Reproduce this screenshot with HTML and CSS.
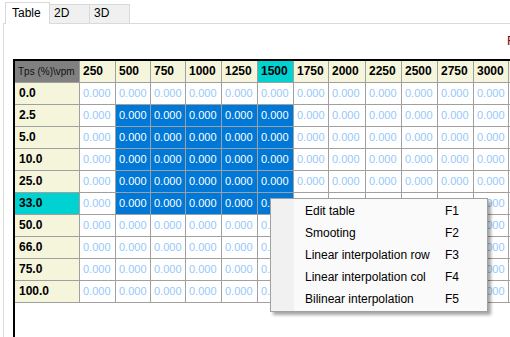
FILE: index.html
```html
<!DOCTYPE html>
<html lang="en">
<head>
  <meta charset="UTF-8">
  <meta name="viewport" content="width=device-width, initial-scale=1.0">
  <title>Map editor</title>
  <link rel="stylesheet" href="styles.css">
</head>
<body>
  <div class="tabs">
    <div class="tab active">Table</div>
    <div class="tab">2D</div>
    <div class="tab">3D</div>
  </div>

  <div class="panel">
    <div class="toolbar"><span class="axis-label">RPM</span></div>
    <div class="grid-box">
      <div class="grid" id="grid"></div>
    </div>
  </div>

  <div class="menu">
    <div class="menu-item"><span class="menu-text">Edit table</span><span>F1</span></div>
    <div class="menu-item"><span class="menu-text">Smooting</span><span>F2</span></div>
    <div class="menu-item"><span class="menu-text">Linear interpolation row</span><span>F3</span></div>
    <div class="menu-item"><span class="menu-text">Linear interpolation col</span><span>F4</span></div>
    <div class="menu-item"><span class="menu-text">Bilinear interpolation</span><span>F5</span></div>
  </div>

  <script>
    const grid = document.getElementById('grid');
    const cols = [250, 500, 750, 1000, 1250, 1500, 1750, 2000, 2250, 2500, 2750, 3000];
    const rows = ['0.0', '2.5', '5.0', '10.0', '25.0', '33.0', '50.0', '66.0', '75.0', '100.0'];
    const hotCol = 5;
    const hotRow = 5;

    function addCell(text, cls) {
      const cell = document.createElement('div');
      cell.className = 'cell ' + cls;
      cell.textContent = text;
      grid.appendChild(cell);
    }

    // Header row (last column only peeks in at the edge)
    addCell('Tps (%)\\vpm', 'corner');
    cols.forEach((c, i) => {
      addCell(c, i === hotCol ? 'col-head hot' : 'col-head');
    });
    addCell('', 'col-head');

    // Data rows, selection covers 500..1500 x 2.5..33.0
    rows.forEach((r, ri) => {
      addCell(r, ri === hotRow ? 'row-head hot' : 'row-head');
      cols.forEach((c, ci) => {
        const selected = ri >= 1 && ri <= 5 && ci >= 1 && ci <= 5;
        addCell('0.000', selected ? 'value sel' : 'value');
      });
      addCell('', 'value');
    });
  </script>
</body>
</html>
```

FILE: styles.css
```css
body {
  margin: 0;
  font-family: "Liberation Sans", Arial, sans-serif;
  font-size: 12px;
  background: #fff;
  overflow: hidden;
}

.tabs {
  display: flex;
  align-items: flex-end;
  height: 24px;
  padding-left: 5px;
  box-sizing: border-box;
  margin-bottom: -1px;
  position: relative;
  z-index: 1;
}

.tab {
  height: 18px;
  line-height: 17px;
  padding: 0 11px 0 4px;
  width: 24px;
  border: 1px solid #d9d9d9;
  border-bottom: none;
  background: #f0f0f0;
  color: #000;
  margin-bottom: 1px;
}

.tab.active {
  height: 21px;
  line-height: 20px;
  width: 30px;
  padding: 0 7px 0 6px;
  background: #fff;
  margin-bottom: 0;
}

.tab + .tab {
  border-left: none;
}

.panel {
  margin-left: 3px;
  border-top: 1px solid #dadada;
  border-left: 1px solid #dadada;
  height: calc(100vh - 24px);
  display: flex;
  flex-direction: column;
  overflow: hidden;
}

.toolbar {
  height: 35px;
  padding-left: 503px;
  padding-top: 9px;
  box-sizing: border-box;
  white-space: nowrap;
  overflow: hidden;
}

.axis-label {
  color: #800000;
  font-size: 13px;
}

.grid-box {
  flex: 1;
  margin-left: 9px;
  border-left: 2px solid #000;
  border-top: 2px solid #000;
  overflow: hidden;
}

.grid {
  display: grid;
  grid-template-columns: 64px 35px 34px 34px 35px 35px 35px 34px 36px 35px 35px 35px 34px 35px;
  grid-auto-rows: 21px;
  gap: 1px;
  padding-bottom: 1px;
  background: #a0a0a0;
  width: max-content;
}

.cell {
  line-height: 21px;
  padding-left: 3px;
  white-space: nowrap;
  overflow: hidden;
}

.corner {
  background: #808080;
  color: #111;
  font-size: 10px;
}

.col-head,
.row-head {
  background: #f5f5dc;
  color: #000;
  font-weight: bold;
  font-size: 12px;
}

.row-head {
  padding-left: 4px;
}

.hot {
  background: #00d2d2;
}

.value {
  background: #fff;
  color: #96c8fa;
  font-size: 11px;
}

.value.sel {
  background: #0078d7;
  color: #fff;
}

.menu {
  position: absolute;
  left: 270px;
  top: 198px;
  width: 218px;
  box-sizing: border-box;
  padding: 1px;
  border: 1px solid #a0a0a0;
  background: linear-gradient(to right, #f1f1f1 0, #f1f1f1 23px, #fafafa 23px);
  box-shadow: 3px 3px 3px rgba(0, 0, 0, 0.35);
  color: #000;
  font-size: 12px;
}

.menu-item {
  display: flex;
  height: 22px;
  line-height: 22px;
  padding-left: 33px;
}

.menu-text {
  width: 140px;
}
```
